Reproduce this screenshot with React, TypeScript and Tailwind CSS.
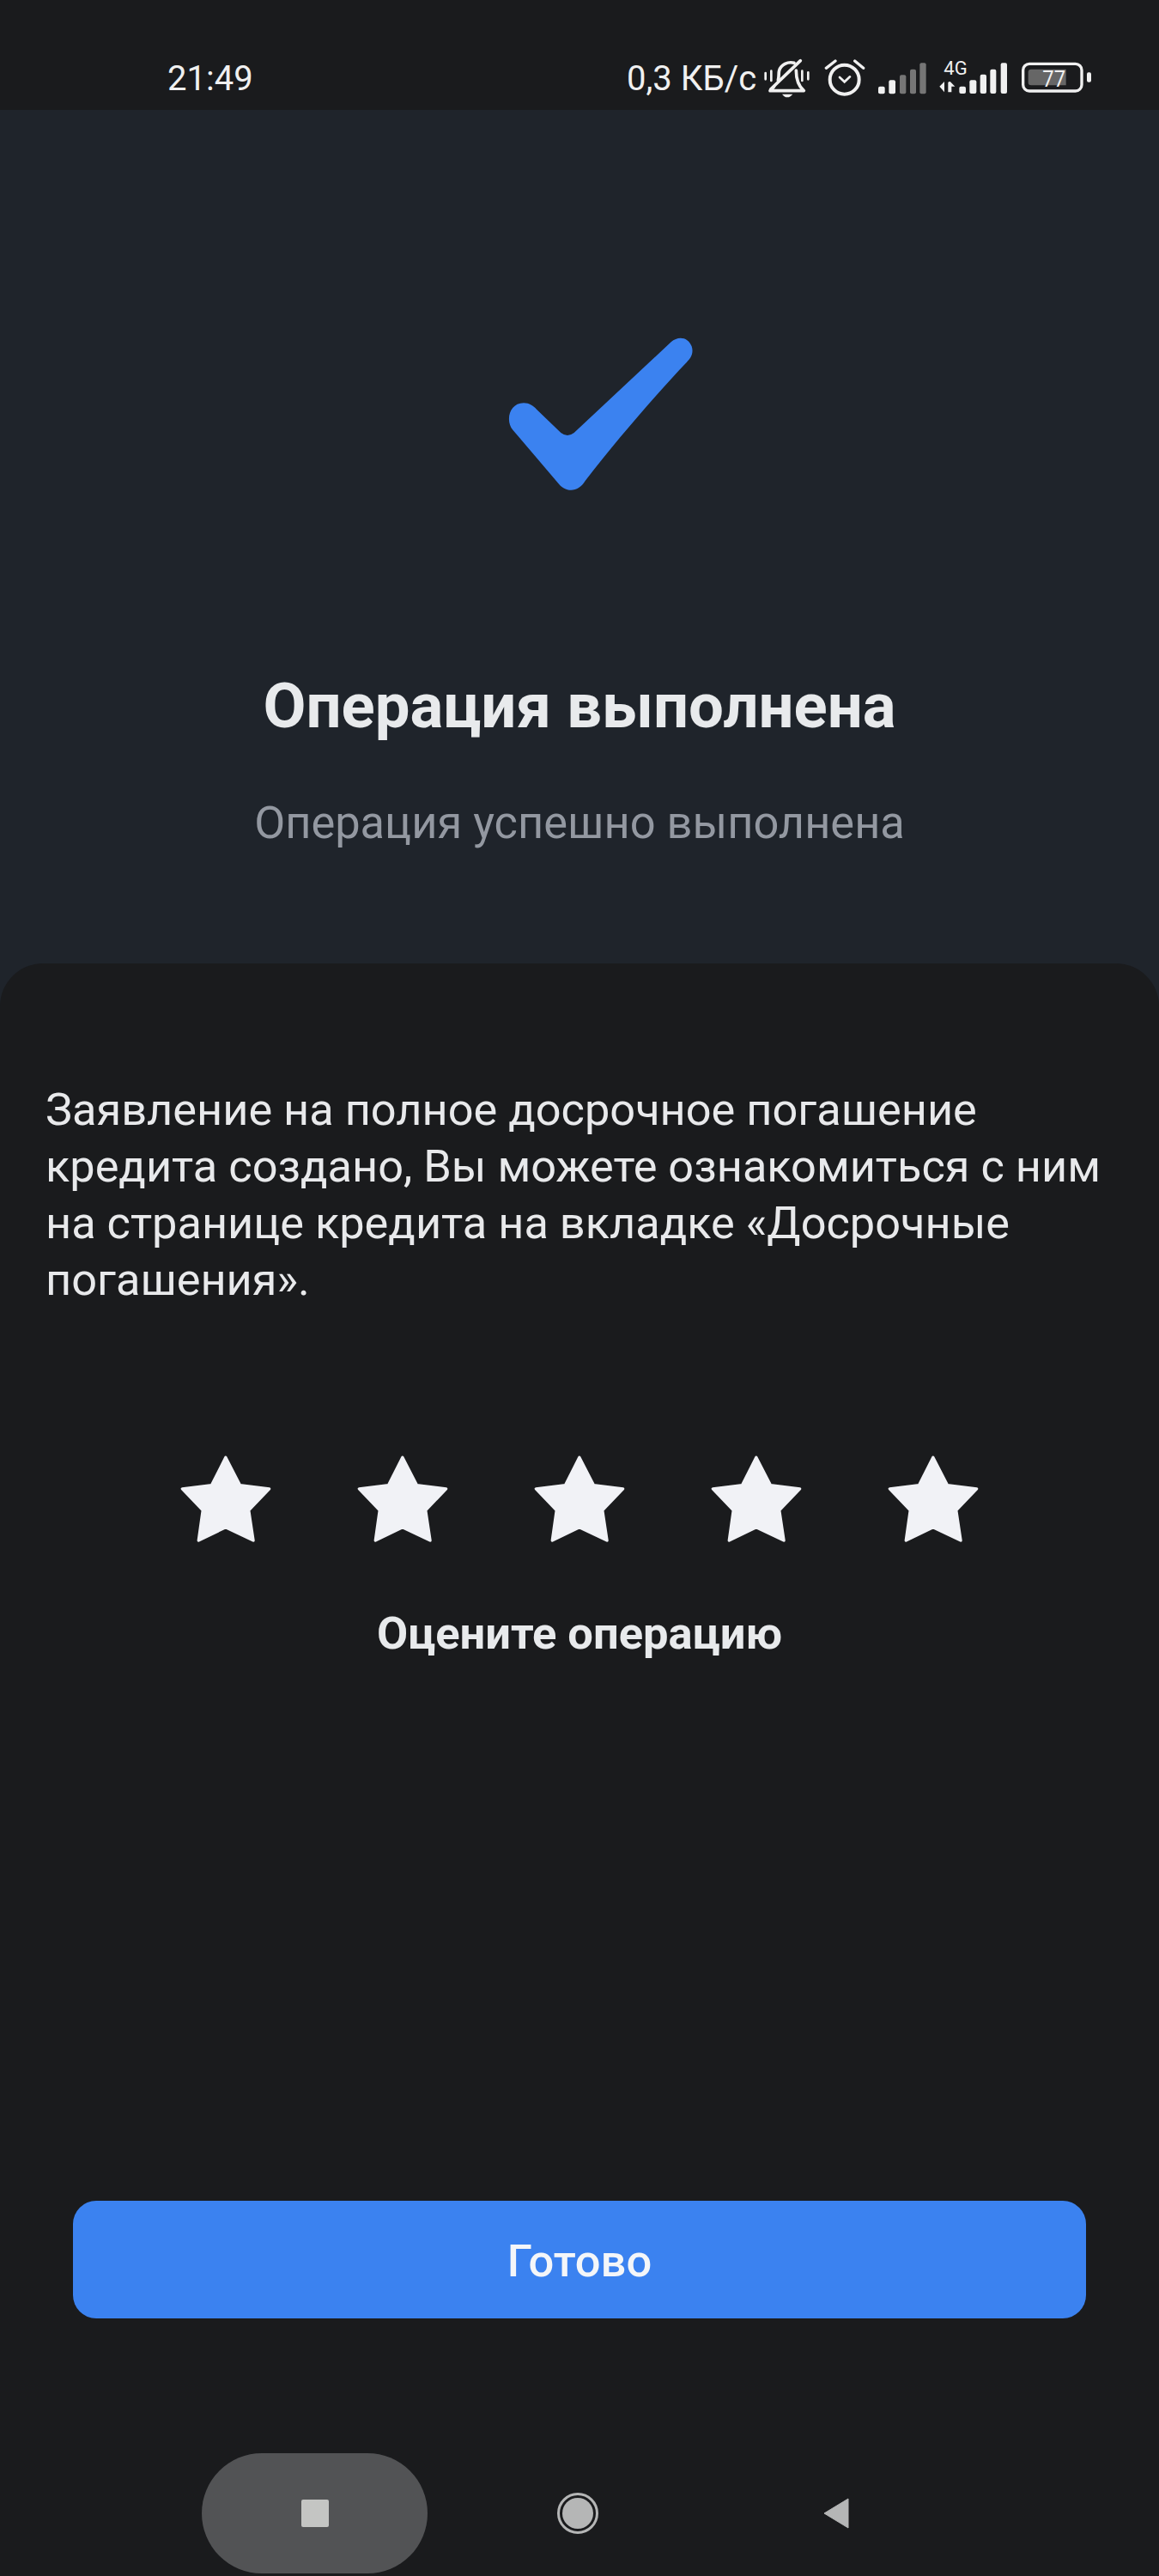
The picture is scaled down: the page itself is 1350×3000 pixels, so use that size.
const stars = [1, 2, 3, 4, 5]

function Star() {
  return (
    <svg viewBox="55 70 325 310" className="h-[103px] w-[108px]">
      <path
        d="M217 80 L267 177 L370 190 L298 265 L314 371 L217 325 L122 371 L137 265 L65 190 L168 177 Z"
        fill="#f1f2f6"
        stroke="#f1f2f6"
        strokeWidth="10"
        strokeLinejoin="round"
      />
    </svg>
  )
}

function StatusIcons() {
  return (
    <div className="flex items-start">
      {/* muted bell */}
      <svg viewBox="15 24 162 144" className="ml-[10px] h-[48px] w-[54px]" fill="none" stroke="#f0f0f0" strokeLinecap="round">
        <path d="M64 100 C68 88 65 76 68 66 C74 46 98 34 120 40 M127 66 C127 90 132 118 154 137 H36 L50 122" strokeWidth="11" strokeLinejoin="round" />
        <path d="M38 132 L142 32" strokeWidth="11" />
        <path d="M20 75 V97 M40 68 V102 M148 68 V102 M169 73 V97" strokeWidth="8" />
        <path d="M78 149 H115 Q106 160 96 160 Q86 160 78 149 Z" fill="#f0f0f0" stroke="none" />
      </svg>
      {/* alarm */}
      <svg viewBox="225 24 144 144" className="ml-[16px] h-[48px] w-[48px]" fill="none" stroke="#f0f0f0" strokeLinecap="round">
        <circle cx="296" cy="98" r="51" strokeWidth="12" />
        <path d="M232 58 L264 33 M332 33 L362 58" strokeWidth="10" />
        <path d="M279 90 L296 106 L315 88" strokeWidth="8" />
      </svg>
      {/* first sim */}
      <svg viewBox="415 24 168 144" className="ml-[15px] h-[48px] w-[56px]" fill="#f0f0f0">
        <rect x="415" y="122" width="23" height="26" rx="6" />
        <rect x="452" y="100" width="23" height="48" rx="6" />
        <rect x="490" y="82" width="22" height="66" rx="6" fill="#767676" />
        <rect x="526" y="62" width="21" height="86" rx="6" fill="#767676" />
        <rect x="560" y="40" width="22" height="108" rx="6" fill="#767676" />
      </svg>
      {/* second sim with 4G */}
      <svg viewBox="27 24 240 144" className="ml-[15px] h-[48px] w-[80px]" fill="#f0f0f0">
        <text x="43" y="80" fontSize="65" textLength="82" lengthAdjust="spacingAndGlyphs">4G</text>
        <path d="M28 122 L45 105 V142 Z M58 142 V108 Q62 104 66 106 L82 122 H70 V142 Z" />
        <rect x="97" y="122" width="23" height="25" rx="6" />
        <rect x="133" y="100" width="24" height="47" rx="6" />
        <rect x="170" y="80" width="22" height="67" rx="6" />
        <rect x="205" y="62" width="21" height="85" rx="6" />
        <rect x="242" y="40" width="22" height="107" rx="6" />
      </svg>
      {/* battery */}
      <svg viewBox="315 24 246 144" className="ml-[16px] h-[48px] w-[82px]">
        <rect x="320" y="43" width="205" height="95" rx="22" fill="none" stroke="#f0f0f0" strokeWidth="10" />
        <path d="M338 72 Q338 62 348 62 H470 V118 H348 Q338 118 338 108 Z" fill="#666666" />
        <text x="388" y="122" fontSize="76" fill="#f0f0f0" textLength="80" lengthAdjust="spacingAndGlyphs">77</text>
        <rect x="543" y="73" width="15" height="34" rx="6" fill="#f0f0f0" />
      </svg>
    </div>
  )
}

export default function App() {
  return (
    <div className="flex h-[3000px] w-[1350px] flex-col overflow-hidden bg-[#1f242b] font-['Roboto',sans-serif]">
      <header className="flex h-[128px] items-start bg-[#1a1b1d] pl-[195px] pt-[68px] text-[40px] leading-[48px] text-[#f0f0f0]">
        <span className="w-[100px]">21:49</span>
        <span className="ml-[435px] w-[150px] whitespace-nowrap">0,3 КБ/с</span>
        <StatusIcons />
      </header>

      <section className="flex h-[994px] flex-col items-center">
        <svg viewBox="0 0 780 630" className="ml-[30px] mt-[242px] h-[210px] w-[260px]">
          <path
            d="M112 392 C85 360 100 298 150 298 C170 298 183 308 195 320 L280 402 Q303 420 326 402 L665 85 C690 62 725 68 737 100 C745 125 733 142 720 155 C620 260 480 420 365 570 C340 612 295 612 268 575 Z"
            fill="#3b82f0"
          />
        </svg>
        <h1 className="mt-[203px] text-[72.5px] font-bold leading-[80px] text-[#e8eaec]">Операция выполнена</h1>
        <p className="mt-[65px] text-[52.4px] leading-[60px] text-[#9398a1]">Операция успешно выполнена</p>
      </section>

      <main className="flex flex-1 flex-col rounded-t-[50px] bg-[#1a1b1d]">
        <p className="mt-[137px] px-[53px] text-[52.3px] leading-[66px] text-[#e8e9eb]">
          Заявление на полное досрочное погашение
          <br />
          кредита создано, Вы можете ознакомиться с ним
          <br />
          на странице кредита на вкладке «Досрочные
          <br />
          погашения».
        </p>

        <div className="mt-[171px] flex justify-center gap-[98px]">
          {stars.map((s) => (
            <Star key={s} />
          ))}
        </div>
        <p className="mt-[75px] text-center text-[52.5px] font-bold leading-[60px] text-[#e8eaec]">Оцените операцию</p>

        <button className="mx-[85px] mt-[631px] h-[137px] rounded-[27px] bg-[#3b82f0] pt-[4px] text-[52.5px] font-medium text-[#f4f6f9]">
          Готово
        </button>

        <nav className="mt-[157px] flex h-[140px] items-center">
          <div className="ml-[235px] flex h-[140px] w-[263px] items-center justify-center rounded-full bg-[#525355]">
            <div className="h-[32px] w-[32px] rounded-[2px] bg-[#c4c5c3]" />
          </div>
          <div className="ml-[151px] flex h-[48px] w-[48px] items-center justify-center rounded-full border-[3px] border-[#b5b6b6]">
            <div className="h-[36px] w-[36px] rounded-full bg-[#b5b6b6]" />
          </div>
          <svg viewBox="0 0 30 36" className="ml-[262px] h-[36px] w-[30px]">
            <path d="M29 1 V35 L1 18 Z" fill="#b5b6b6" stroke="#b5b6b6" strokeWidth="1" strokeLinejoin="round" />
          </svg>
        </nav>
      </main>
    </div>
  )
}
